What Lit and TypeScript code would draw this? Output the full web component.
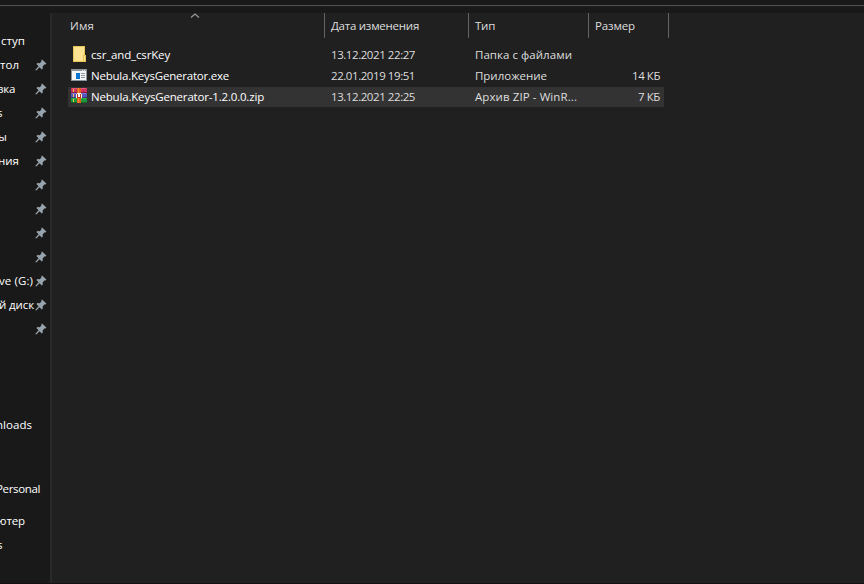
import { LitElement, html, svg, css } from "lit";
import { customElement, property } from "lit/decorators.js";

const FONT = '"Open Sans"';
const STACK = `${FONT}, "Noto Sans", sans-serif`;
const ctx = document.createElement("canvas").getContext("2d")!;

/** A single line of text, tracked so that it fills the given width. */
@customElement("fit-text")
class FitText extends LitElement {
  @property() text = "";
  @property({ type: Number }) w = 0;
  static styles = css`
    :host { display: block; white-space: pre; font-size: 11.5px; line-height: 15px; flex: none; }
  `;
  render() {
    ctx.font = `11.5px ${STACK}`;
    const gap = (this.w - ctx.measureText(this.text).width) / this.text.length;
    return html`<span style="letter-spacing:${gap.toFixed(3)}px">${this.text}</span>`;
  }
}

const pin = html`<svg class="pin" width="12" height="12" viewBox="0 0 12 12">
  <path fill="#98a4ad" d="M7 0.6L11.4 4.6L10.4 5.6L9.4 5.4L7.6 7.4L7.8 9.6L6.8 10.4L4.5 8.2L1.6 11.2L0.5 11.4L0.6 10.4L3.6 7.3L1.4 5L2.4 4L4.6 4.2L6.5 2.4L6.2 1.4Z"/>
</svg>`;

const folder = html`<svg width="16" height="18" viewBox="0 0 16 18">
  <path fill="#e8c558" d="M2 1h12v16H2z"/><path fill="#ffe391" d="M3 2h10v14H3z"/>
  <path fill="#e8c558" d="M12 10h3v7h-3z"/><path fill="#ffe391" d="M13 11h1v5h-1z"/>
</svg>`;

const app = html`<svg width="16" height="18" viewBox="0 0 16 18">
  <path fill="#8c959c" d="M0 3h16v12H0z"/><path fill="#f4f4f4" d="M1 5h14v9H1z"/>
  <path fill="#e5e8ea" d="M11 4h1v1h-1zM13 4h1v1h-1z"/>
  <path fill="#0875d1" d="M5 7h4v6H5z"/><path fill="#8d969d" d="M10 7h4v1h-4zM10 9h4v1h-4zM10 11h4v1h-4z"/>
</svg>`;

const band = (y: number, top: string, mid: string, low: string) => svg`
  <rect x="0" y=${y} width="16" height="5" fill=${low}/>
  <rect x="0" y=${y} width="16" height="4" fill=${mid}/>
  <rect x="1" y=${y} width="14" height="1" fill=${top}/>
  <rect x="2" y=${y + 1} width="1" height="3" fill="#f2c14c"/>`;

const archive = html`<svg width="16" height="18" viewBox="0 0 16 18">
  ${band(1, "#e2587d", "#cf2f5d", "#8e1c3c")}
  ${band(6, "#7d78d6", "#5a54bd", "#38357f")}
  ${band(11, "#35b14d", "#1d9a38", "#116325")}
  <path fill="#e2601c" d="M6 1h4v15H6z"/><path fill="#f08a3c" d="M7 1h1v15H7z"/>
  <path fill="#f3efe9" d="M5 7h1v4H5zM10 7h1v4h-1zM6 6h4v1H6z"/><path fill="#bb3514" d="M6 7h4v4H6z"/>
  <path fill="#fff" d="M7 7h2v3H7z"/>
</svg>`;

// label, advance width, right edge, pinned, space above the row
const nav: [string, number, number, boolean, number][] = [
  ["ступ", 24, 25, false, 0], ["тол", 19, 19, true, 0], ["зка", 17, 15, true, 0],
  ["s", 5, 2, true, 0], ["ы", 8, 6, true, 0], ["ния", 21, 19, true, 0],
  ["", 0, 0, true, 0], ["", 0, 0, true, 0], ["", 0, 0, true, 0], ["", 0, 0, true, 0],
  ["ve (G:)", 34, 33, true, 0], ["й диск", 35, 34, true, 0], ["", 0, 0, true, 0],
  ["nloads", 36, 32, false, 72], ["Personal", 44, 40, false, 40],
  ["ютер", 28, 25, false, 8], ["s", 5, 2, false, 0],
];

const files = [
  { icon: folder, name: "csr_and_csrKey", nw: 79, date: "13.12.2021 22:27", dw: 84, type: "Папка с файлами", tw: 97, size: "", sw: 0 },
  { icon: app, name: "Nebula.KeysGenerator.exe", nw: 138, date: "22.01.2019 19:51", dw: 84, type: "Приложение", tw: 72, size: "14 КБ", sw: 28 },
  { icon: archive, name: "Nebula.KeysGenerator-1.2.0.0.zip", nw: 173, date: "13.12.2021 22:25", dw: 84, type: "Архив ZIP - WinR...", tw: 102, size: "7 КБ", sw: 22, on: true },
];

@customElement("app-root")
class AppRoot extends LitElement {
  static styles = css`
    :host { display: flex; flex-direction: column; width: 864px; height: 584px; overflow: hidden;
      box-sizing: border-box; background: #191919; color: #fff; border-bottom: 1px solid #160f13;
      font-family: "Open Sans", "Noto Sans", sans-serif; }
    .top { flex: none; height: 5px; border-bottom: 1px solid #535353; margin-bottom: 7px; }
    .body { flex: 1; display: flex; min-height: 0; }
    .nav { width: 50px; flex: none; padding-top: 16px; overflow: hidden; }
    .item { height: 24px; display: flex; align-items: center; }
    .label { display: flex; justify-content: flex-end; flex: none; padding-bottom: 1px; }
    .pin { margin-left: auto; margin-right: 3px; flex: none; }
    .split { width: 2px; flex: none; background: #292929; }
    .main { flex: 1; background: #202020; padding-left: 16px; }
    .head { display: flex; height: 25px; color: #dedede; }
    .col { box-sizing: border-box; border-right: 1px solid #636363; padding: 5px 0 0 6px; position: relative; }
    .col:first-child { width: 257px; padding-left: 2px; }
    .date { width: 144px; } .type { width: 120px; } .size { width: 80px; }
    .sort { position: absolute; left: 122px; top: 0; }
    .rows { padding-top: 6px; width: 596px; }
    .row { height: 21px; box-sizing: border-box; display: flex; align-items: flex-start; padding-top: 3px; color: #dedede; }
    .row.on { background: #333; height: 20px; margin-top: 1px; padding-top: 2px; }
    .icon { display: flex; width: 20px; padding-left: 3px; margin-top: -2px; }
    .name { width: 240px; color: #fff; }
    .row .date { width: 144px; } .row .type { width: 120px; }
    .row .size { width: 65px; display: flex; justify-content: flex-end; }
  `;
  render() {
    return html`
      <div class="top"></div>
      <div class="body">
        <div class="nav">
          ${nav.map(([t, w, right, pinned, gap]) => html`
            <div class="item" style="margin-top:${gap}px">
              <div class="label" style="width:${right}px"><fit-text .text=${t} .w=${w}></fit-text></div>
              ${pinned ? pin : ""}
            </div>`)}
        </div>
        <div class="split"></div>
        <div class="main">
          <div class="head">
            <div class="col"><svg class="sort" width="10" height="6" viewBox="0 0 10 6"><path d="M1 4.5L5 1L9 4.5" fill="none" stroke="#9a9a9a" stroke-width="1.2"/></svg><fit-text .text=${"Имя"} .w=${24}></fit-text></div>
            <div class="col date"><fit-text .text=${"Дата изменения"} .w=${88}></fit-text></div>
            <div class="col type"><fit-text .text=${"Тип"} .w=${20}></fit-text></div>
            <div class="col size"><fit-text .text=${"Размер"} .w=${40}></fit-text></div>
          </div>
          <div class="rows">
            ${files.map((f) => html`
              <div class="row ${f.on ? "on" : ""}">
                <div class="icon">${f.icon}</div>
                <div class="name"><fit-text .text=${f.name} .w=${f.nw}></fit-text></div>
                <div class="date"><fit-text .text=${f.date} .w=${f.dw}></fit-text></div>
                <div class="type"><fit-text .text=${f.type} .w=${f.tw}></fit-text></div>
                <div class="size">${f.size ? html`<fit-text .text=${f.size} .w=${f.sw}></fit-text>` : ""}</div>
              </div>`)}
          </div>
        </div>
      </div>`;
  }
}
